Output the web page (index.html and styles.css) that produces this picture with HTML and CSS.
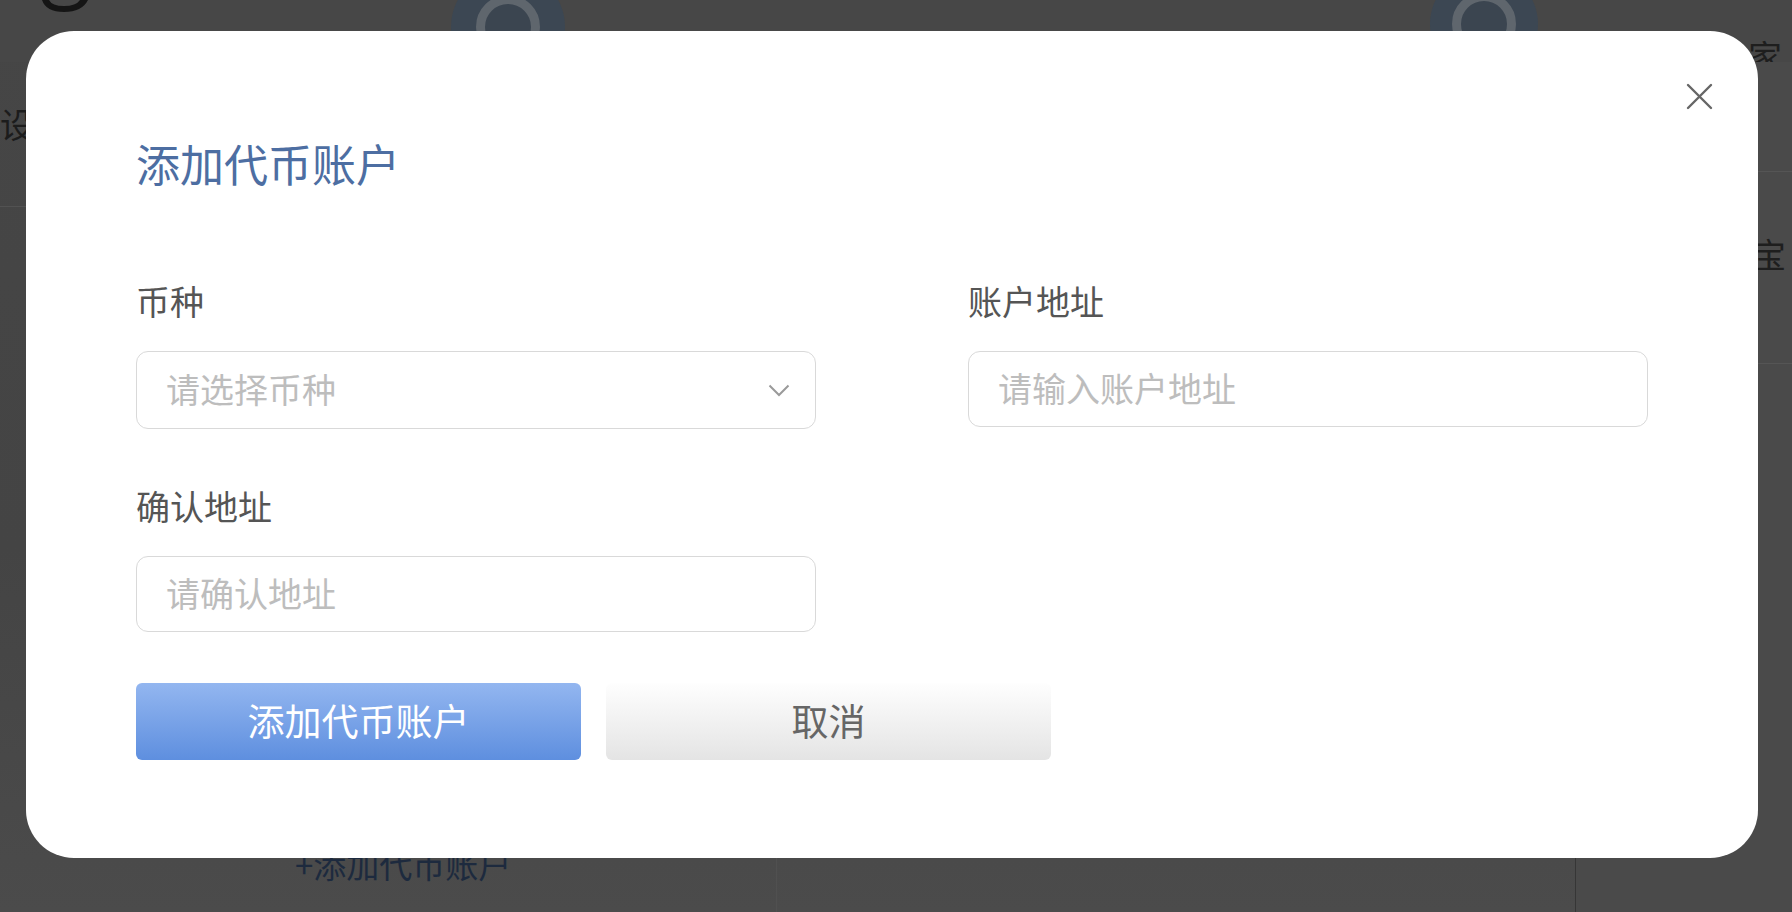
FILE: index.html
```html
<!DOCTYPE html>
<html lang="zh-CN">
<head>
<meta charset="utf-8">
<title>添加代币账户</title>
<link rel="stylesheet" href="styles.css">
</head>
<body>
<div class="page">
  <header class="topbar">
    <svg class="logo-frag" width="50" height="14" viewBox="0 0 50 14"><path d="M2 0 Q6 12 24 12 Q42 12 48 0 L40 0 Q36 6 24 6 Q12 6 9 0 Z" fill="#151515"/></svg>
    <div class="avatar avatar-1"><span></span></div>
    <div class="avatar avatar-2"><span></span></div>
    <div class="top-word">家</div>
  </header>
  <div class="content">
    <aside class="col-left">
      <div class="side-item">设</div>
      <div class="add-link">+添加代币账户</div>
    </aside>
    <main class="col-mid"></main>
    <aside class="col-right">
      <div class="right-row"></div>
      <div class="right-row word">宝</div>
    </aside>
  </div>
</div>

<div class="overlay">
  <div class="modal">
    <button class="close" aria-label="关闭">
      <svg width="27" height="27" viewBox="0 0 27 27"><path d="M2 2 L25 25 M25 2 L2 25" stroke="#666" stroke-width="2.4" fill="none" stroke-linecap="round"/></svg>
    </button>
    <h2 class="modal-title">添加代币账户</h2>
    <div class="form">
      <div class="field">
        <label>币种</label>
        <div class="control select">
          <span>请选择币种</span>
          <svg width="22" height="13" viewBox="0 0 22 13"><path d="M1.5 1.5 L11 11 L20.5 1.5" stroke="#9a9a9a" stroke-width="2" fill="none"/></svg>
        </div>
      </div>
      <div class="field">
        <label>账户地址</label>
        <div class="control">请输入账户地址</div>
      </div>
      <div class="field">
        <label>确认地址</label>
        <div class="control">请确认地址</div>
      </div>
    </div>
    <div class="actions">
      <button class="btn btn-primary">添加代币账户</button>
      <button class="btn btn-cancel">取消</button>
    </div>
  </div>
</div>
</body>
</html>
```

FILE: styles.css
```css
html, body {
  margin: 0;
  padding: 0;
}
body {
  width: 1792px;
  height: 912px;
  overflow: hidden;
  background: #484848;
  font-family: "Noto Sans CJK SC", "Noto Sans", sans-serif;
}

/* ---------- dimmed page underneath ---------- */
.page {
  height: 912px;
  display: flex;
  flex-direction: column;
  background: linear-gradient(180deg, #464646 0%, #444444 60%, #4b4b4b 100%);
}
.topbar {
  height: 62px;
  flex: none;
  display: flex;
  align-items: flex-start;
  background: #474747;
}
.logo-frag {
  margin-left: 40px;
  flex: none;
}
.avatar {
  flex: none;
  width: 114px;
  height: 114px;
  margin-top: -30px;
  border-radius: 50%;
  background: #3c4753;
  display: flex;
  align-items: center;
  justify-content: center;
}
.avatar span {
  width: 46px;
  height: 46px;
  border-radius: 50%;
  border: 9px solid #5f666d;
  background: #3b4550;
}
.avatar-1 {
  margin-left: 361px;
}
.avatar-2 {
  margin-left: 865px;
  width: 108px;
  height: 108px;
}
.top-word {
  margin-left: 210px;
  margin-top: 36px;
  font-size: 34px;
  line-height: 40px;
  color: #1e1e1e;
}
.content {
  flex: 1;
  display: grid;
  grid-template-columns: 777px 798px 1fr;
}
.col-left {
  display: flex;
  flex-direction: column;
  justify-content: space-between;
  border-right: 1px solid #505050;
}
.side-item {
  margin-top: 42px;
  font-size: 34px;
  line-height: 40px;
  color: #1c1c1c;
  padding-bottom: 62px;
  border-bottom: 1px solid #525252;
}
.add-link {
  padding-left: 295px;
  padding-bottom: 28px;
  font-size: 33px;
  line-height: 40px;
  color: #1d2a3e;
}
.col-right {
  border-left: 1px solid #363636;
  background: #4a4a4a;
}
.right-row {
  height: 109px;
  border-bottom: 1px solid #555;
}
.right-row.word {
  height: 192px;
  padding-left: 176px;
  box-sizing: border-box;
  padding-top: 62px;
  font-size: 34px;
  line-height: 40px;
  color: #1e1e1e;
}

/* ---------- modal ---------- */
.overlay {
  position: fixed;
  inset: 0;
}
.modal {
  position: absolute;
  left: 26px;
  top: 31px;
  width: 1732px;
  height: 827px;
  box-sizing: border-box;
  padding: 107px 110px 0;
  background: #fff;
  border-radius: 48px;
}
.close {
  position: absolute;
  top: 52px;
  right: 45px;
  width: 27px;
  height: 27px;
  padding: 0;
  border: none;
  background: none;
  display: flex;
}
.modal-title {
  margin: 0;
  font-size: 44px;
  line-height: 50px;
  font-weight: 400;
  color: #4d6ea2;
}
.form {
  margin-top: 93px;
  display: grid;
  grid-template-columns: 680px 680px;
  column-gap: 152px;
  row-gap: 57px;
}
.field label {
  display: block;
  font-size: 34px;
  line-height: 40px;
  color: #555;
  margin-bottom: 30px;
}
.control {
  height: 76px;
  box-sizing: border-box;
  border: 1px solid #d9d9d9;
  border-radius: 12px;
  padding: 0 25px 3px 29px;
  display: flex;
  align-items: center;
  justify-content: space-between;
  font-size: 34px;
  color: #bdbdbd;
}
.control.select {
  height: 78px;
}
.control.select svg {
  margin-top: 3px;
}
.actions {
  margin-top: 51px;
  display: flex;
  gap: 25px;
}
.btn {
  width: 445px;
  height: 77px;
  border: none;
  border-radius: 6px;
  font-family: inherit;
  font-size: 37px;
  padding: 0 0 3px;
  display: flex;
  align-items: center;
  justify-content: center;
}
.btn-primary {
  background: linear-gradient(180deg, #93b6f0 0%, #5e8fdf 100%);
  color: #fff;
}
.btn-cancel {
  background: linear-gradient(180deg, #fefefe 0%, #e4e4e4 100%);
  color: #666;
}
```
